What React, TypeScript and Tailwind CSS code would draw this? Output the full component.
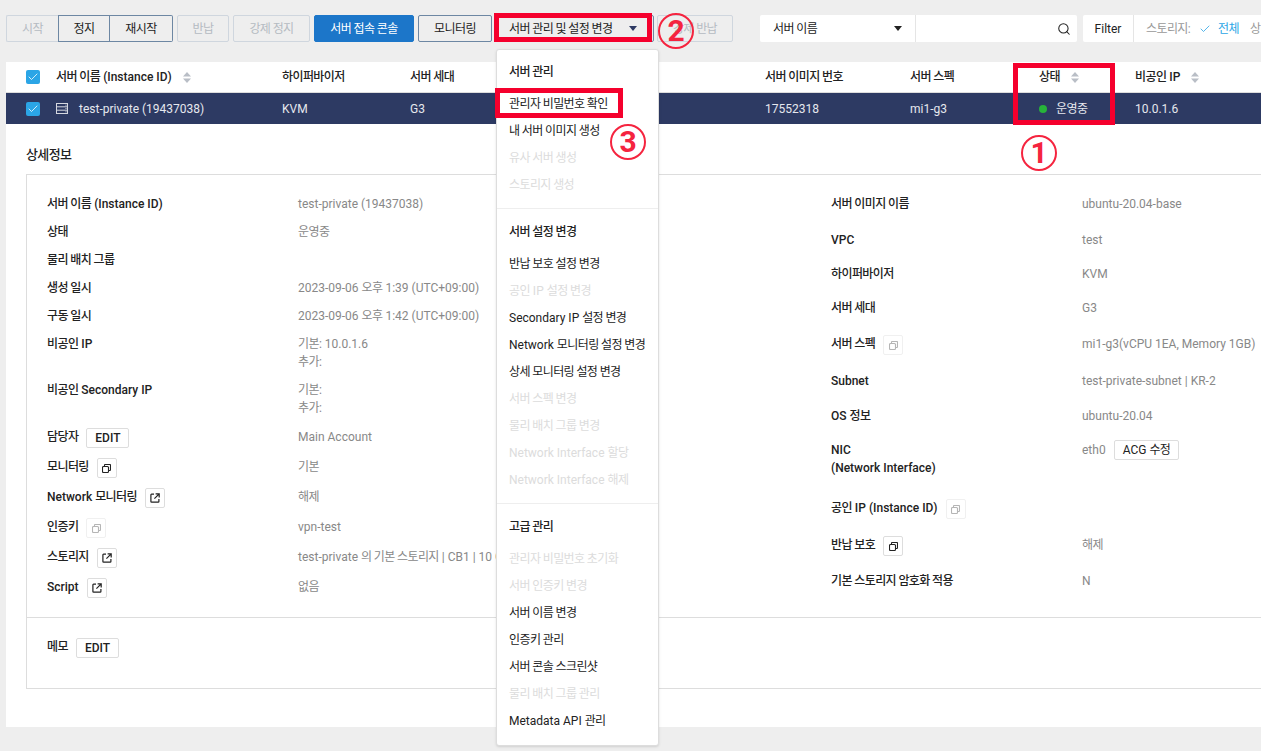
import type { ReactNode } from 'react';
import { Check, Search } from 'lucide-react';

// hangul runs are set tighter than the fallback font gives them, latin stays as is
const T = ({ children }: { children: string }) => (
  <span>
    {children.split(/([\uAC00-\uD7A3]+(?:\s+[\uAC00-\uD7A3]+)*)/).map((part, i) =>
      i % 2 === 1 ? <span key={i} className="tracking-[-0.6px]">{part}</span> : part,
    )}
  </span>
);

const wrap = (node: ReactNode) => (typeof node === 'string' ? <T>{node}</T> : node);

const CopyIcon = ({ muted = false }: { muted?: boolean }) => (
  <svg width="9" height="9" viewBox="0 0 9 9" fill="none" stroke={muted ? '#b5b5b5' : '#222222'} strokeWidth="1.1">
    <rect x="0.5" y="2.5" width="6" height="6" rx="1" />
    <path d="M2.5 2.5V1.2C2.5 0.8 2.8 0.5 3.2 0.5H7.8C8.2 0.5 8.5 0.8 8.5 1.2V5.8C8.5 6.2 8.2 6.5 7.8 6.5H6.5" />
  </svg>
);

const LinkIcon = () => (
  <svg width="10" height="10" viewBox="0 0 10 10" fill="none" stroke="#222222" strokeWidth="1.2">
    <path d="M4 1.1H1.6C1.2 1.1 0.9 1.4 0.9 1.8V8.4C0.9 8.8 1.2 9.1 1.6 9.1H8.2C8.6 9.1 8.9 8.8 8.9 8.4V6" />
    <path d="M5.6 0.8H9.2V4.4M9.2 0.8L4.4 5.6" />
  </svg>
);

const IconButton = ({ kind }: { kind: 'copy' | 'muted' | 'link' }) => (
  <span className={`ml-2 mt-[2px] flex h-5 w-5 shrink-0 items-center justify-center rounded-[2px] border ${kind === 'muted' ? 'border-[#f0f0f0]' : 'border-[#dddddd]'}`}>
    {kind === 'link' ? <LinkIcon /> : <CopyIcon muted={kind === 'muted'} />}
  </span>
);

const SmallButton = ({ label }: { label: string }) => (
  <span className="ml-2 mt-[2px] flex h-5 shrink-0 items-center rounded-[2px] border border-[#dddddd] px-2 font-medium text-[#222222]">{label}</span>
);

const SortIcon = () => (
  <svg width="8" height="11" viewBox="0 0 8 11" className="ml-[11px] shrink-0" fill="#b9bec6">
    <path d="M4 0L8 4.5H0Z" />
    <path d="M4 11L0 6.5H8Z" />
  </svg>
);

const CheckBox = () => (
  <span className="flex h-[14px] w-[14px] items-center justify-center rounded-[2px] bg-[#2ba5e6]">
    <Check size={12} strokeWidth={1.6} color="#ffffff" />
  </span>
);

const Row = ({ label, h, extra, children }: { label: ReactNode; h: string; extra?: ReactNode; children?: ReactNode }) => (
  <div className={`flex ${h}`}>
    <div className="w-[251px] shrink-0">
      <div className="flex h-[18px] items-center whitespace-nowrap font-medium text-[#222222]">
        {wrap(label)}
        {extra}
      </div>
    </div>
    <div className="whitespace-nowrap text-[#888888]">{wrap(children)}</div>
  </div>
);

const Circled = ({ n, pos }: { n: string; pos: string }) => (
  <span className={`absolute flex h-[36px] w-[36px] items-center justify-center rounded-full border-2 border-[#f5243f] text-[30px] font-bold leading-none text-[#f5243f] ${pos}`}>{n}</span>
);

const toolButton = 'flex h-[27px] shrink-0 items-center justify-center rounded-[2px] border tracking-[-0.6px]';
const disabledButton = `${toolButton} border-[#cfd6de] text-[#b5bbc2]`;
const activeButton = `${toolButton} border-[#6d87a3] text-[#222222]`;

const menu = [
  {
    title: '서버 관리',
    items: [
      ['관리자 비밀번호 확인', true],
      ['내 서버 이미지 생성', true],
      ['유사 서버 생성', false],
      ['스토리지 생성', false],
    ],
  },
  {
    title: '서버 설정 변경',
    items: [
      ['반납 보호 설정 변경', true],
      ['공인 IP 설정 변경', false],
      ['Secondary IP 설정 변경', true],
      ['Network 모니터링 설정 변경', true],
      ['상세 모니터링 설정 변경', true],
      ['서버 스펙 변경', false],
      ['물리 배치 그룹 변경', false],
      ['Network Interface 할당', false],
      ['Network Interface 해제', false],
    ],
  },
  {
    title: '고급 관리',
    items: [
      ['관리자 비밀번호 초기화', false],
      ['서버 인증키 변경', false],
      ['서버 이름 변경', true],
      ['인증키 관리', true],
      ['서버 콘솔 스크린샷', true],
      ['물리 배치 그룹 관리', false],
      ['Metadata API 관리', true],
    ],
  },
] as const;

export default function App() {
  return (
    <div className="relative h-[751px] w-[1261px] overflow-hidden bg-[#eeeeee] pl-[6px] pt-[15px] font-[family-name:Roboto,'Noto_Sans_CJK_KR',sans-serif] text-xs leading-[18px] text-[#222222]">
      {/* Toolbar */}
      <div className="flex items-start">
        <div className={`${disabledButton} w-[52px] rounded-r-none border-r-0`}>시작</div>
        <div className={`${activeButton} w-[52px] rounded-none`}>정지</div>
        <div className={`${activeButton} w-[63px] rounded-l-none border-l-0`}>재시작</div>
        <div className={`${disabledButton} ml-[4px] w-[52px]`}>반납</div>
        <div className={`${disabledButton} ml-[4px] w-[77px]`}>강제 정지</div>
        <div className={`${toolButton} ml-[4px] w-[100px] border-[#1c76c9] bg-[#1c76c9] text-white`}>서버 접속 콘솔</div>
        <div className={`${activeButton} ml-[4px] w-[74px]`}>모니터링</div>
        <div className="ml-[2px] flex h-[27px] w-[160px] shrink-0 items-center justify-between rounded-[2px] border border-[#6d87a3] px-[14px] tracking-[-0.6px]">
          <span>서버 관리 및 설정 변경</span>
          <span className="mr-[2px] h-0 w-0 border-x-[4px] border-t-[5px] border-x-transparent border-t-[#2d3a63]" />
        </div>
        <div className={`${disabledButton} ml-[3px] w-[76px]`}>강제 반납</div>
        <div className="ml-[27px] flex h-[27px] w-[317px] shrink-0 rounded-[2px] bg-white">
          <div className="flex w-[156px] items-center justify-between border-r border-[#e5e5e5] px-[13px] tracking-[-0.6px]">
            <span>서버 이름</span>
            <span className="h-0 w-0 border-x-[4px] border-t-[5px] border-x-transparent border-t-[#222222]" />
          </div>
          <div className="flex flex-1 items-center justify-end pr-[6px]">
            <Search size={14} strokeWidth={1.8} color="#222222" />
          </div>
        </div>
        <div className="ml-[6px] flex h-[27px] shrink-0 rounded-[2px] bg-white">
          <div className="flex w-[51px] items-center justify-center border-r border-[#e5e5e5]">Filter</div>
          <div className="flex items-center whitespace-nowrap pl-[12px] tracking-[-0.6px] text-[#999999]">
            <span>스토리지:</span>
            <Check size={12} strokeWidth={1.6} color="#2ba5e6" className="ml-[9px]" />
            <span className="ml-[7px] text-[#2ba5e6]">전체</span>
            <span className="ml-[11px]">상태</span>
          </div>
        </div>
      </div>

      {/* Server table and details */}
      <div className="mt-5 h-[665px] bg-white">
        <div className="flex h-[31px] items-center border-b border-[#dddddd] pl-5 font-medium">
          <div className="w-[30px]"><CheckBox /></div>
          <div className="flex w-[226px] items-center"><T>서버 이름 (Instance ID)</T><SortIcon /></div>
          <div className="w-[128px]"><T>하이퍼바이저</T></div>
          <div className="w-[355px]"><T>서버 세대</T></div>
          <div className="w-[145px]"><T>서버 이미지 번호</T></div>
          <div className="w-[129px]"><T>서버 스펙</T></div>
          <div className="flex w-[96px] items-center"><T>상태</T><SortIcon /></div>
          <div className="flex items-center"><T>비공인 IP</T><SortIcon /></div>
        </div>
        <div className="flex h-[31px] items-center bg-[#2d3a63] pl-5 text-[#e6e8ee]">
          <div className="w-[30px]"><CheckBox /></div>
          <div className="flex w-[226px] items-center">
            <svg width="12" height="11" viewBox="0 0 12 11" fill="none" stroke="#d5d8e0" className="mr-[11px]">
              <rect x="0.5" y="0.5" width="11" height="10" />
              <path d="M0.5 3.8H11.5M0.5 7.2H11.5M9.5 2.2H10.5M9.5 5.5H10.5M9.5 8.8H10.5" />
            </svg>
            test-private (19437038)
          </div>
          <div className="w-[128px]">KVM</div>
          <div className="w-[355px]">G3</div>
          <div className="w-[145px]">17552318</div>
          <div className="w-[129px]">mi1-g3</div>
          <div className="flex w-[96px] items-center">
            <span className="mr-[9px] h-2 w-2 rounded-full bg-[#27b33a]" />
            <T>운영중</T>
          </div>
          <div>10.0.1.6</div>
        </div>

        <div className="pl-5 pt-[22px]">
          <h2 className="text-[13px] font-medium leading-[18px] tracking-[-0.6px]">상세정보</h2>
          <div className="mt-[10px] h-[515px] border border-r-0 border-[#dddddd]">
            <div className="flex h-[443px] border-b border-[#dddddd] pl-5 pt-5">
              <div className="w-[784px] shrink-0">
                <Row label="서버 이름 (Instance ID)" h="h-[28px]">test-private (19437038)</Row>
                <Row label="상태" h="h-[28px]">운영중</Row>
                <Row label="물리 배치 그룹" h="h-[28px]" />
                <Row label="생성 일시" h="h-[28px]">2023-09-06 오후 1:39 (UTC+09:00)</Row>
                <Row label="구동 일시" h="h-[28px]">2023-09-06 오후 1:42 (UTC+09:00)</Row>
                <Row label="비공인 IP" h="h-[46px]"><T>기본: 10.0.1.6</T><br /><T>추가:</T></Row>
                <Row label="비공인 Secondary IP" h="h-[47px]"><T>기본:</T><br /><T>추가:</T></Row>
                <Row label="담당자" h="h-[30px]" extra={<SmallButton label="EDIT" />}>Main Account</Row>
                <Row label="모니터링" h="h-[30px]" extra={<IconButton kind="copy" />}>기본</Row>
                <Row label="Network 모니터링" h="h-[30px]" extra={<IconButton kind="link" />}>해제</Row>
                <Row label="인증키" h="h-[30px]" extra={<IconButton kind="muted" />}>vpn-test</Row>
                <Row label="스토리지" h="h-[30px]" extra={<IconButton kind="link" />}>test-private 의 기본 스토리지 | CB1 | 10 GB</Row>
                <Row label="Script" h="h-[30px]" extra={<IconButton kind="link" />}>없음</Row>
              </div>
              <div className="flex-1 whitespace-nowrap">
                <Row label="서버 이미지 이름" h="h-[36px]">ubuntu-20.04-base</Row>
                <Row label="VPC" h="h-[34px]">test</Row>
                <Row label="하이퍼바이저" h="h-[34px]">KVM</Row>
                <Row label="서버 세대" h="h-[36px]">G3</Row>
                <Row label="서버 스펙" h="h-[37px]" extra={<IconButton kind="muted" />}>mi1-g3(vCPU 1EA, Memory 1GB)</Row>
                <Row label="Subnet" h="h-[35px]">test-private-subnet | KR-2</Row>
                <Row label="OS 정보" h="h-[34px]">ubuntu-20.04</Row>
                <Row label="NIC" h="h-[18px]">
                  <div className="flex h-[18px] items-center">
                    eth0
                    <span className="ml-2 flex h-5 items-center rounded-[2px] border border-[#dddddd] px-2 text-[#222222]"><T>ACG 수정</T></span>
                  </div>
                </Row>
                <Row label="(Network Interface)" h="h-[40px]" />
                <Row label="공인 IP (Instance ID)" h="h-[37px]" extra={<IconButton kind="muted" />} />
                <Row label="반납 보호" h="h-[36px]" extra={<IconButton kind="copy" />}>해제</Row>
                <Row label="기본 스토리지 암호화 적용" h="h-[18px]">N</Row>
              </div>
            </div>
            <div className="pl-5 pt-5">
              <div className="flex h-[18px] items-center font-medium">
                <T>메모</T>
                <SmallButton label="EDIT" />
              </div>
            </div>
          </div>
        </div>
      </div>

      {/* Open dropdown */}
      <div className="absolute left-[496px] top-[49px] w-[163px] rounded-[3px] border border-[#dddddd] bg-white shadow-sm">
        {menu.map((section, index) => (
          <div key={section.title} className={index === 0 ? 'pb-[10px] pl-3 pt-[8px]' : index === 1 ? 'border-t border-[#eeeeee] pb-[10px] pl-3 pt-[9px]' : 'border-t border-[#eeeeee] pb-[11px] pl-3 pt-[9px]'}>
            <div className="mb-[5px] flex h-[27px] items-center font-medium"><T>{section.title}</T></div>
            {section.items.map(([label, enabled]) => (
              <div key={label} className={`flex h-[27px] items-center whitespace-nowrap ${enabled ? 'text-[#222222]' : 'text-[#dcdcdc]'}`}><T>{label}</T></div>
            ))}
          </div>
        ))}
      </div>

      {/* Red annotations */}
      <div className="absolute left-[494px] top-[13px] h-[29px] w-[158px] border-[5px] border-[#f5002d]" />
      <div className="absolute left-[495px] top-[88px] h-[30px] w-[128px] border-[5px] border-[#f5002d]" />
      <div className="absolute left-[1013px] top-[63px] h-[62px] w-[102px] border-[5px] border-[#f5002d]" />
      <Circled n="2" pos="left-[658px] top-[13px]" />
      <Circled n="3" pos="left-[610px] top-[124px]" />
      <Circled n="1" pos="left-[1021px] top-[135px]" />
    </div>
  );
}
